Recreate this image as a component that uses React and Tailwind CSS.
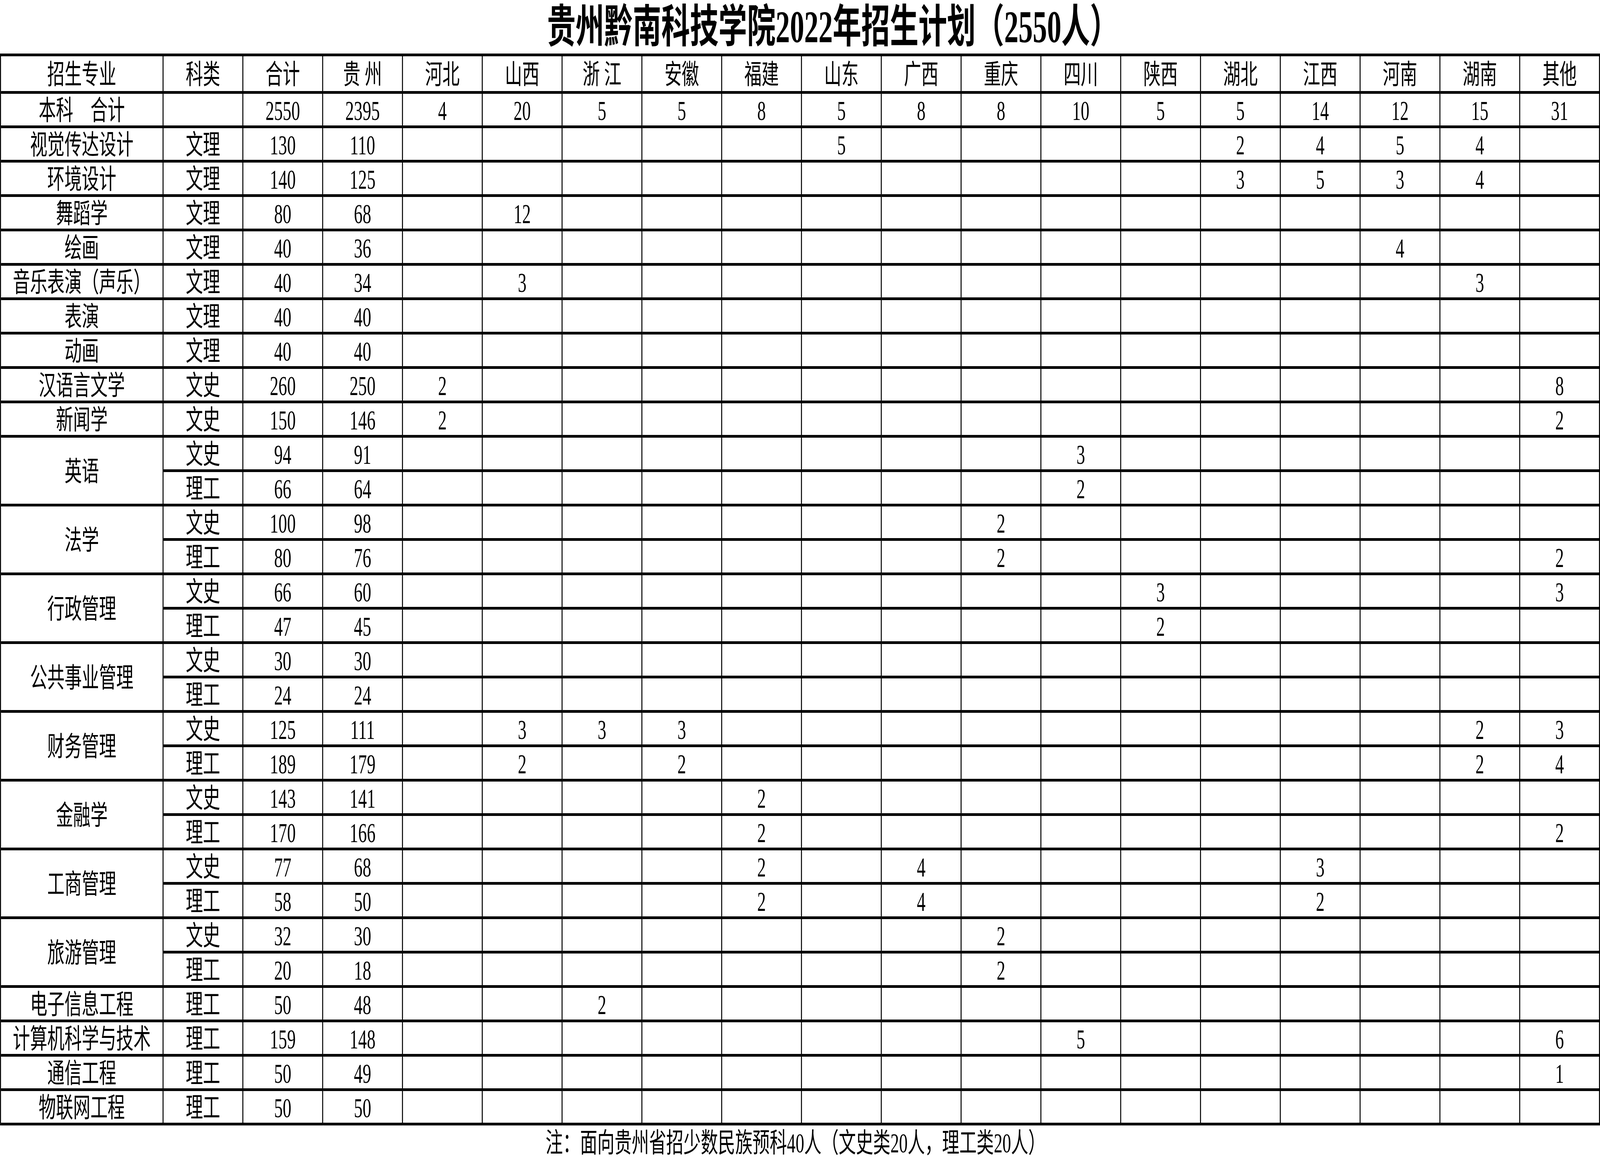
import React from 'react';

const provinces = ['河北', '山西', '浙江', '安徽', '福建', '山东', '广西', '重庆', '四川', '陕西', '湖北', '江西', '河南', '湖南', '其他'];
const headLabels = ['招生专业', '科类', '合计', '贵 州', '河北', '山西', '浙 江', '安徽', '福建', '山东', '广西', '重庆', '四川', '陕西', '湖北', '江西', '河南', '湖南', '其他'];

// [科类, 合计, 贵州, {province: count}]
const groups = [
  { name: '本科\u3000合计', rows: [['', 2550, 2395, { 河北: 4, 山西: 20, 浙江: 5, 安徽: 5, 福建: 8, 山东: 5, 广西: 8, 重庆: 8, 四川: 10, 陕西: 5, 湖北: 5, 江西: 14, 河南: 12, 湖南: 15, 其他: 31 }]] },
  { name: '视觉传达设计', rows: [['文理', 130, 110, { 山东: 5, 湖北: 2, 江西: 4, 河南: 5, 湖南: 4 }]] },
  { name: '环境设计', rows: [['文理', 140, 125, { 湖北: 3, 江西: 5, 河南: 3, 湖南: 4 }]] },
  { name: '舞蹈学', rows: [['文理', 80, 68, { 山西: 12 }]] },
  { name: '绘画', rows: [['文理', 40, 36, { 河南: 4 }]] },
  { name: '音乐表演（声乐）', rows: [['文理', 40, 34, { 山西: 3, 湖南: 3 }]] },
  { name: '表演', rows: [['文理', 40, 40, {}]] },
  { name: '动画', rows: [['文理', 40, 40, {}]] },
  { name: '汉语言文学', rows: [['文史', 260, 250, { 河北: 2, 其他: 8 }]] },
  { name: '新闻学', rows: [['文史', 150, 146, { 河北: 2, 其他: 2 }]] },
  { name: '英语', rows: [['文史', 94, 91, { 四川: 3 }], ['理工', 66, 64, { 四川: 2 }]] },
  { name: '法学', rows: [['文史', 100, 98, { 重庆: 2 }], ['理工', 80, 76, { 重庆: 2, 其他: 2 }]] },
  { name: '行政管理', rows: [['文史', 66, 60, { 陕西: 3, 其他: 3 }], ['理工', 47, 45, { 陕西: 2 }]] },
  { name: '公共事业管理', rows: [['文史', 30, 30, {}], ['理工', 24, 24, {}]] },
  { name: '财务管理', rows: [['文史', 125, 111, { 山西: 3, 浙江: 3, 安徽: 3, 湖南: 2, 其他: 3 }], ['理工', 189, 179, { 山西: 2, 安徽: 2, 湖南: 2, 其他: 4 }]] },
  { name: '金融学', rows: [['文史', 143, 141, { 福建: 2 }], ['理工', 170, 166, { 福建: 2, 其他: 2 }]] },
  { name: '工商管理', rows: [['文史', 77, 68, { 福建: 2, 广西: 4, 江西: 3 }], ['理工', 58, 50, { 福建: 2, 广西: 4, 江西: 2 }]] },
  { name: '旅游管理', rows: [['文史', 32, 30, { 重庆: 2 }], ['理工', 20, 18, { 重庆: 2 }]] },
  { name: '电子信息工程', rows: [['理工', 50, 48, { 浙江: 2 }]] },
  { name: '计算机科学与技术', rows: [['理工', 159, 148, { 四川: 5, 其他: 6 }]] },
  { name: '通信工程', rows: [['理工', 50, 49, { 其他: 1 }]] },
  { name: '物联网工程', rows: [['理工', 50, 50, {}]] },
];

const cell = 'flex items-center justify-center pt-[6px] border-r-[4px] border-b-[7px] border-black text-[70px] leading-none whitespace-pre';

const Cell = ({ children, span }) => (
  <div className={`${cell} ${span ? 'row-span-2' : ''}`}>{children}</div>
);

export default function App() {
  // the sheet is drawn at 6496px; squeeze it if the window is narrower
  const k = typeof window !== 'undefined' ? Math.min(1, window.innerWidth / 6496) : 1;

  return (
    <div className="w-full h-[2971px] overflow-hidden bg-white">
      <div
        className="w-[6496px] h-[2971px] origin-top-left bg-white text-black [font-family:'Liberation_Serif','Noto_Sans_CJK_SC',serif]"
        style={{ transform: `scaleX(${k})` }}
      >
        <div className="h-[137px] flex items-center justify-center pl-[266px]">
          <h1 className="text-[116px] font-bold leading-none whitespace-nowrap">贵州黔南科技学院2022年招生计划（2550人）</h1>
        </div>

        <div className="grid grid-cols-[660px_repeat(18,324px)] grid-rows-[96px_repeat(30,88px)] border-t-[7px] border-l-[4px] border-black">
          {headLabels.map((h) => (
            <Cell key={h}>{h}</Cell>
          ))}
          {groups.map((g) =>
            g.rows.map((r, i) => (
              <React.Fragment key={g.name + i}>
                {i === 0 && <Cell span={g.rows.length === 2}>{g.name}</Cell>}
                <Cell>{r[0]}</Cell>
                <Cell>{r[1]}</Cell>
                <Cell>{r[2]}</Cell>
                {provinces.map((p) => (
                  <Cell key={p}>{r[3][p] ?? ''}</Cell>
                ))}
              </React.Fragment>
            ))
          )}
        </div>

        <div className="h-[91px] flex items-center justify-center pr-[36px]">
          <p className="text-[70px] leading-none whitespace-nowrap">注：面向贵州省招少数民族预科40人（文史类20人，理工类20人）</p>
        </div>
      </div>
    </div>
  );
}
